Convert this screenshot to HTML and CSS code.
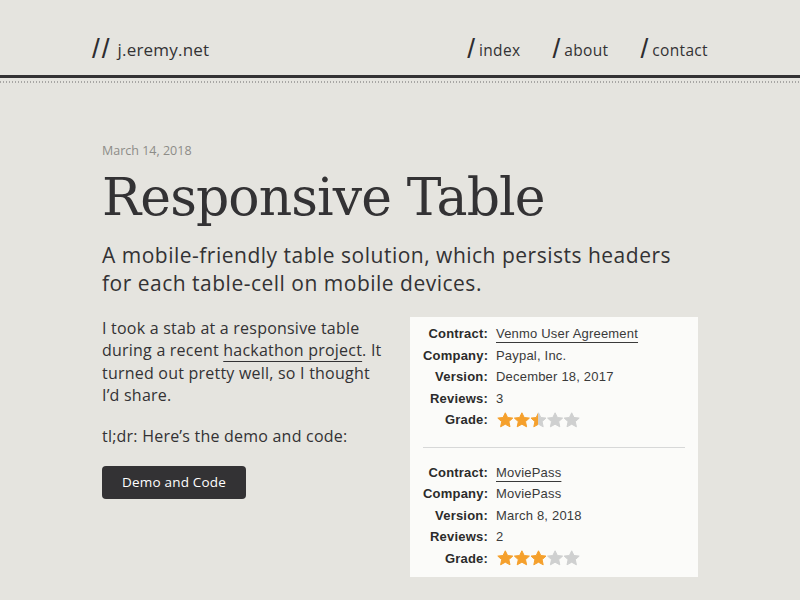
FILE: index.html
```html
<!DOCTYPE html>
<html lang="en">
<head>
<meta charset="utf-8">
<title>Responsive Table</title>
<link rel="stylesheet" href="styles.css">
</head>
<body>
<header class="site-header">
  <div class="header-inner">
    <a class="logo" href="#"><span class="slash">//</span><span>j.eremy.net</span></a>
    <nav class="nav">
      <a href="#"><span class="slash">/</span><span>index</span></a>
      <a href="#"><span class="slash">/</span><span>about</span></a>
      <a href="#"><span class="slash">/</span><span>contact</span></a>
    </nav>
  </div>
  <div class="rule-thick"></div>
  <div class="rule-dots"></div>
</header>
<main class="post">
  <p class="date">March 14, 2018</p>
  <h1 class="title">Responsive Table</h1>
  <p class="lede">A mobile-friendly table solution, which persists headers for each table-cell on mobile devices.</p>
  <div class="columns">
    <div class="copy">
      <p>I took a stab at a responsive table during a recent <a href="#">hackathon project</a>. It turned out pretty well, so I thought I’d share.</p>
      <p>tl;dr: Here’s the demo and code:</p>
      <a class="btn" href="#">Demo and Code</a>
    </div>
    <div class="card">
      <svg class="defs" width="0" height="0" aria-hidden="true">
        <defs>
          <path id="st" d="M8.3 0.8 L10.6 5.5 L15.8 6.1 L11.9 9.6 L13 14.8 L8.3 12.2 L3.6 14.8 L4.7 9.6 L0.8 6.1 L6 5.5 Z" stroke-linejoin="round"/>
          <linearGradient id="halfgrad" x1="0" y1="0" x2="1" y2="0">
            <stop offset="0.5" stop-color="#f5a02c"/>
            <stop offset="0.5" stop-color="#cfd0d0"/>
          </linearGradient>
        </defs>
      </svg>
      <dl class="group">
        <dt>Contract:</dt><dd><a href="#">Venmo User Agreement</a></dd>
        <dt>Company:</dt><dd>Paypal, Inc.</dd>
        <dt>Version:</dt><dd>December 18, 2017</dd>
        <dt>Reviews:</dt><dd>3</dd>
        <dt>Grade:</dt><dd class="stars">
          <svg viewBox="0 0 84 16" width="84" height="16">
            <use href="#st" x="0" fill="#f5a02c" stroke="#f5a02c"/>
            <use href="#st" x="16.6" fill="#f5a02c" stroke="#f5a02c"/>
            <use href="#st" x="33.2" fill="url(#halfgrad)" stroke="url(#halfgrad)"/>
            <use href="#st" x="49.8" fill="#cfd0d0" stroke="#cfd0d0"/>
            <use href="#st" x="66.4" fill="#cfd0d0" stroke="#cfd0d0"/>
          </svg>
        </dd>
      </dl>
      <hr class="sep">
      <dl class="group">
        <dt>Contract:</dt><dd><a href="#">MoviePass</a></dd>
        <dt>Company:</dt><dd>MoviePass</dd>
        <dt>Version:</dt><dd>March 8, 2018</dd>
        <dt>Reviews:</dt><dd>2</dd>
        <dt>Grade:</dt><dd class="stars">
          <svg viewBox="0 0 84 16" width="84" height="16">
            <use href="#st" x="0" fill="#f5a02c" stroke="#f5a02c"/>
            <use href="#st" x="16.6" fill="#f5a02c" stroke="#f5a02c"/>
            <use href="#st" x="33.2" fill="#f5a02c" stroke="#f5a02c"/>
            <use href="#st" x="49.8" fill="#cfd0d0" stroke="#cfd0d0"/>
            <use href="#st" x="66.4" fill="#cfd0d0" stroke="#cfd0d0"/>
          </svg>
        </dd>
      </dl>
    </div>
  </div>
</main>
</body>
</html>
```

FILE: styles.css
```css
* { box-sizing: border-box; }
html, body { margin: 0; padding: 0; }
body {
  background: #e5e4df;
  color: #333234;
  font-family: "Open Sans", "Liberation Sans", sans-serif;
  overflow: hidden;
}
a { color: inherit; text-decoration: none; }

.site-header { padding-top: 33px; }
.header-inner {
  width: 616px;
  margin: 0 auto;
  display: flex;
  justify-content: space-between;
  align-items: baseline;
  height: 30px;
}
.logo { font-size: 17px; display: flex; align-items: baseline; gap: 6px; letter-spacing: 0.2px; }
.slash {
  font-family: "Liberation Sans", sans-serif;
  font-weight: 400;
  font-size: 28px;
  line-height: 28px;
  color: #2e2d30;
  letter-spacing: 2px;
  transform: translateY(2px);
}
.nav { display: flex; gap: 32px; font-size: 15.5px; letter-spacing: 0.35px; }
.nav a { display: flex; align-items: baseline; gap: 4px; }
.nav .slash { letter-spacing: 0; }

.rule-thick { height: 3px; background: #333234; margin-top: 12px; }
.rule-dots {
  height: 2px;
  margin-top: 3px;
  background: repeating-linear-gradient(90deg, #a7a6a4 0 1px, transparent 1px 3px);
}

.post { width: 596px; margin: 0 auto; padding-top: 59px; }
.date { margin: 0; font-size: 12.5px; color: #8d8c88; }
.title {
  margin: 6px 0 0;
  font-family: "DejaVu Serif", "Liberation Serif", serif;
  font-weight: 400;
  font-size: 52px;
  line-height: 64px;
  letter-spacing: -0.9px;
  color: #333234;
}
.lede {
  margin: 12px 0 0;
  font-size: 21px;
  line-height: 28px;
  letter-spacing: 0.5px;
  width: 596px;
}
.columns {
  display: grid;
  grid-template-columns: 1fr 288px;
  gap: 26px;
  margin-top: 20px;
}
.copy { font-size: 16px; line-height: 22.3px; letter-spacing: 0.22px; }
.copy p { margin: 0 0 19px; }
.copy p a { text-decoration: underline; text-decoration-thickness: 1px; text-underline-offset: 5px; }
.btn {
  display: inline-block;
  background: #333234;
  color: #fff;
  font-size: 13.5px;
  font-weight: 500;
  letter-spacing: 0.2px;
  padding: 0 20px;
  height: 33px;
  line-height: 33px;
  border-radius: 4px;
}

.card {
  background: #fbfbf9;
  padding: 6px 13px 9px;
  font-family: "Liberation Sans", sans-serif;
  font-size: 13px;
  height: 260px;
  position: relative;
}
.defs { position: absolute; }
.group {
  margin: 0;
  display: grid;
  grid-template-columns: 65px 1fr;
  column-gap: 8px;
  grid-auto-rows: 21.5px;
  align-items: center;
}
.group dt { font-weight: 700; text-align: right; color: #2b2b2b; font-size: 13px; letter-spacing: 0.2px; }
.group dd { margin: 0; color: #3a3a3a; letter-spacing: 0.2px; }
.group dd a { text-decoration: underline; text-decoration-thickness: 1px; text-underline-offset: 4px; }
.stars svg { display: block; margin-left: 1px; }
.sep { border: 0; border-top: 1px solid #d7d8d8; margin: 16px 0 14px; }
```
